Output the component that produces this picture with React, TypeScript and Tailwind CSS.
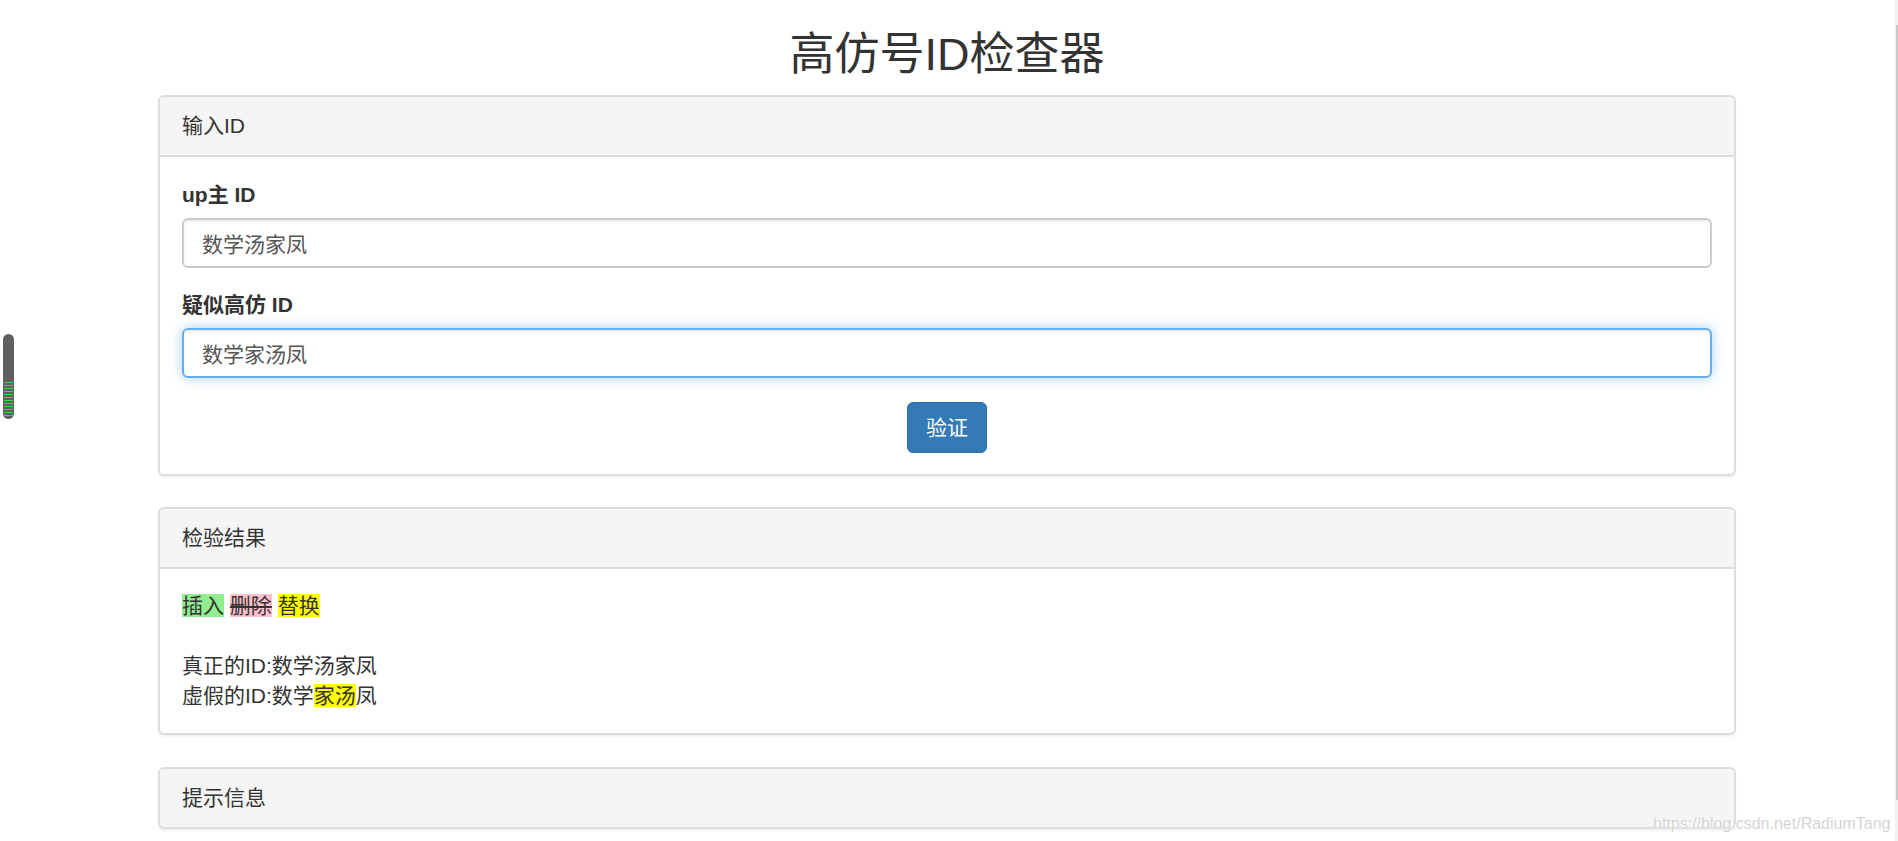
import React from "react";

const font = { fontFamily: '"Liberation Sans", "Noto Sans CJK SC", sans-serif' };

function PanelHeading({ title, last }: { title: string; last?: boolean }) {
  return (
    <div
      className={
        "flex items-center rounded-t-[5px] bg-[#f5f5f5] px-[22px] text-[21px] text-[#333]" +
        (last ? " h-[58px] rounded-b-[5px]" : " h-[60px] border-b-2 border-[#dddddd]")
      }
    >
      {title}
    </div>
  );
}

function Field({ label, value, focused }: { label: string; value: string; focused?: boolean }) {
  return (
    <div>
      <label className="mb-[8px] block text-[21px] font-bold leading-[30px] text-[#333]">{label}</label>
      <input
        readOnly
        value={value}
        className={
          "block h-[50px] w-full rounded-[6px] border-2 bg-white px-[18px] text-[21px] text-[#555] outline-none " +
          (focused
            ? "border-[#66afe9] shadow-[inset_0_2px_2px_rgba(0,0,0,0.075),0_0_12px_rgba(102,175,233,0.6)]"
            : "border-[#cccccc] shadow-[inset_0_2px_2px_rgba(0,0,0,0.075)]")
        }
        style={font}
      />
    </div>
  );
}

function LevelMeter() {
  const bars = Array.from({ length: 12 });
  return (
    <div className="absolute left-[3px] top-[334px] flex h-[85px] w-[11px] flex-col justify-end rounded-full bg-[#5f5f5f] px-[1px] pb-[3px]">
      <div className="flex flex-col gap-[2px]">
        {bars.map((_, i) => (
          <div key={i} className="h-[1px] w-full bg-[#2fdc4c]" />
        ))}
      </div>
    </div>
  );
}

export default function App() {
  return (
    <div className="relative h-[841px] w-full overflow-hidden bg-white text-[#333]" style={font}>
      <LevelMeter />

      <div className="pl-[158px] pr-[162px]">
        <h1 className="h-[95px] pt-[25px] text-center text-[45px] font-normal leading-[60px] text-[#333]">
          高仿号ID检查器
        </h1>

        {/* 输入 */}
        <div className="rounded-[6px] border-2 border-[#dddddd] bg-white shadow-[0_2px_2px_rgba(0,0,0,0.05)]">
          <PanelHeading title="输入ID" />
          <div className="px-[22px] pb-[21px] pt-[23px]">
            <Field label="up主 ID" value="数学汤家凤" />
            <div className="mt-[22px]">
              <Field label="疑似高仿 ID" value="数学家汤凤" focused />
            </div>
            <div className="mt-[24px] flex justify-center">
              <button
                className="h-[51px] rounded-[6px] border border-[#2e6da4] bg-[#337ab7] px-[18px] text-[21px] leading-[30px] text-white"
                style={font}
              >
                验证
              </button>
            </div>
          </div>
        </div>

        {/* 结果 */}
        <div className="mt-[31px] rounded-[6px] border-2 border-[#dddddd] bg-white shadow-[0_2px_2px_rgba(0,0,0,0.05)]">
          <PanelHeading title="检验结果" />
          <div className="p-[22px] text-[21px] leading-[30px]">
            <div>
              <span className="inline-block bg-[#90ee90] leading-[23px]">插入</span>{" "}
              <span className="inline-block bg-[#ffc0cb] leading-[23px] line-through">删除</span>{" "}
              <span className="inline-block bg-[#ffff00] leading-[23px]">替换</span>
            </div>
            <div className="h-[30px]" />
            <div>真正的ID:数学汤家凤</div>
            <div>
              虚假的ID:数学<span className="inline-block bg-[#ffff00] leading-[23px]">家汤</span>凤
            </div>
          </div>
        </div>

        {/* 提示 */}
        <div className="mt-[32px] rounded-[6px] border-2 border-[#dddddd] bg-white shadow-[0_2px_2px_rgba(0,0,0,0.05)]">
          <PanelHeading title="提示信息" last />
        </div>
      </div>

      <div className="absolute left-[1653px] top-[812px] text-[16px] text-[#d4d4d4] [text-shadow:0_0_2px_#fff,0_0_1px_#fff]">
        https://blog.csdn.net/RadiumTang
      </div>

      <div className="absolute right-0 top-0 h-full w-[3px] bg-[#f1f1f1]">
        <div className="ml-auto mt-[25px] h-[775px] w-[2px] bg-[#c9c9c9]" />
      </div>
    </div>
  );
}
